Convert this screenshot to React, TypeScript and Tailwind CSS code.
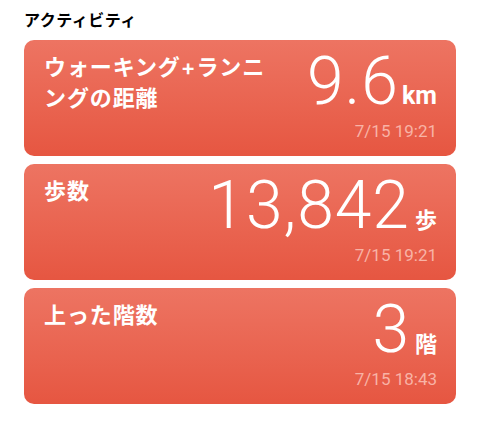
import React from "react";

const font = { fontFamily: '"Inter", "Noto Sans CJK JP", sans-serif' };
const num = { fontFamily: 'Roboto, "Noto Sans CJK JP", sans-serif' };

type Item = { title: string; value: string; unit: string; date: string; unitLatin?: boolean };

const items: Item[] = [
  { title: "ウォーキング+ランニングの距離", value: "9.6", unit: "km", date: "7/15 19:21", unitLatin: true },
  { title: "歩数", value: "13,842", unit: "歩", date: "7/15 19:21" },
  { title: "上った階数", value: "3", unit: "階", date: "7/15 18:43" },
];

function Card({ item }: { item: Item }) {
  return (
    <div className="flex h-[116px] justify-between rounded-[10px] bg-gradient-to-b from-[#ed7462] to-[#e65641] pl-5 pr-[19px] pt-[12px] text-white">
      <div className="w-[240px] text-[22px] font-semibold leading-[31px] tracking-[0.9px]">{item.title}</div>
      <div className="flex flex-col items-end" style={num}>
        <div className="flex items-baseline">
          <span className="text-[66px] font-light leading-[60px] tracking-[1px]">{item.value}</span>
          {item.unitLatin ? (
            <span className="ml-[3px] text-[25px] font-bold leading-none">{item.unit}</span>
          ) : (
            <span className="ml-[5px] text-[22px] font-semibold leading-none" style={font}>{item.unit}</span>
          )}
        </div>
        <div className="mt-[9px] text-[17px] leading-[20px] text-[#f8b3a6]">{item.date}</div>
      </div>
    </div>
  );
}

export default function App() {
  return (
    <div className="h-[433px] w-[480px] bg-white px-6 pt-[9px]" style={font}>
      <div className="mb-2 text-[16px] font-bold leading-[23px] tracking-[0.5px] text-black">アクティビティ</div>
      <div className="flex flex-col gap-2">
        {items.map((it) => (
          <Card key={it.title} item={it} />
        ))}
      </div>
    </div>
  );
}
